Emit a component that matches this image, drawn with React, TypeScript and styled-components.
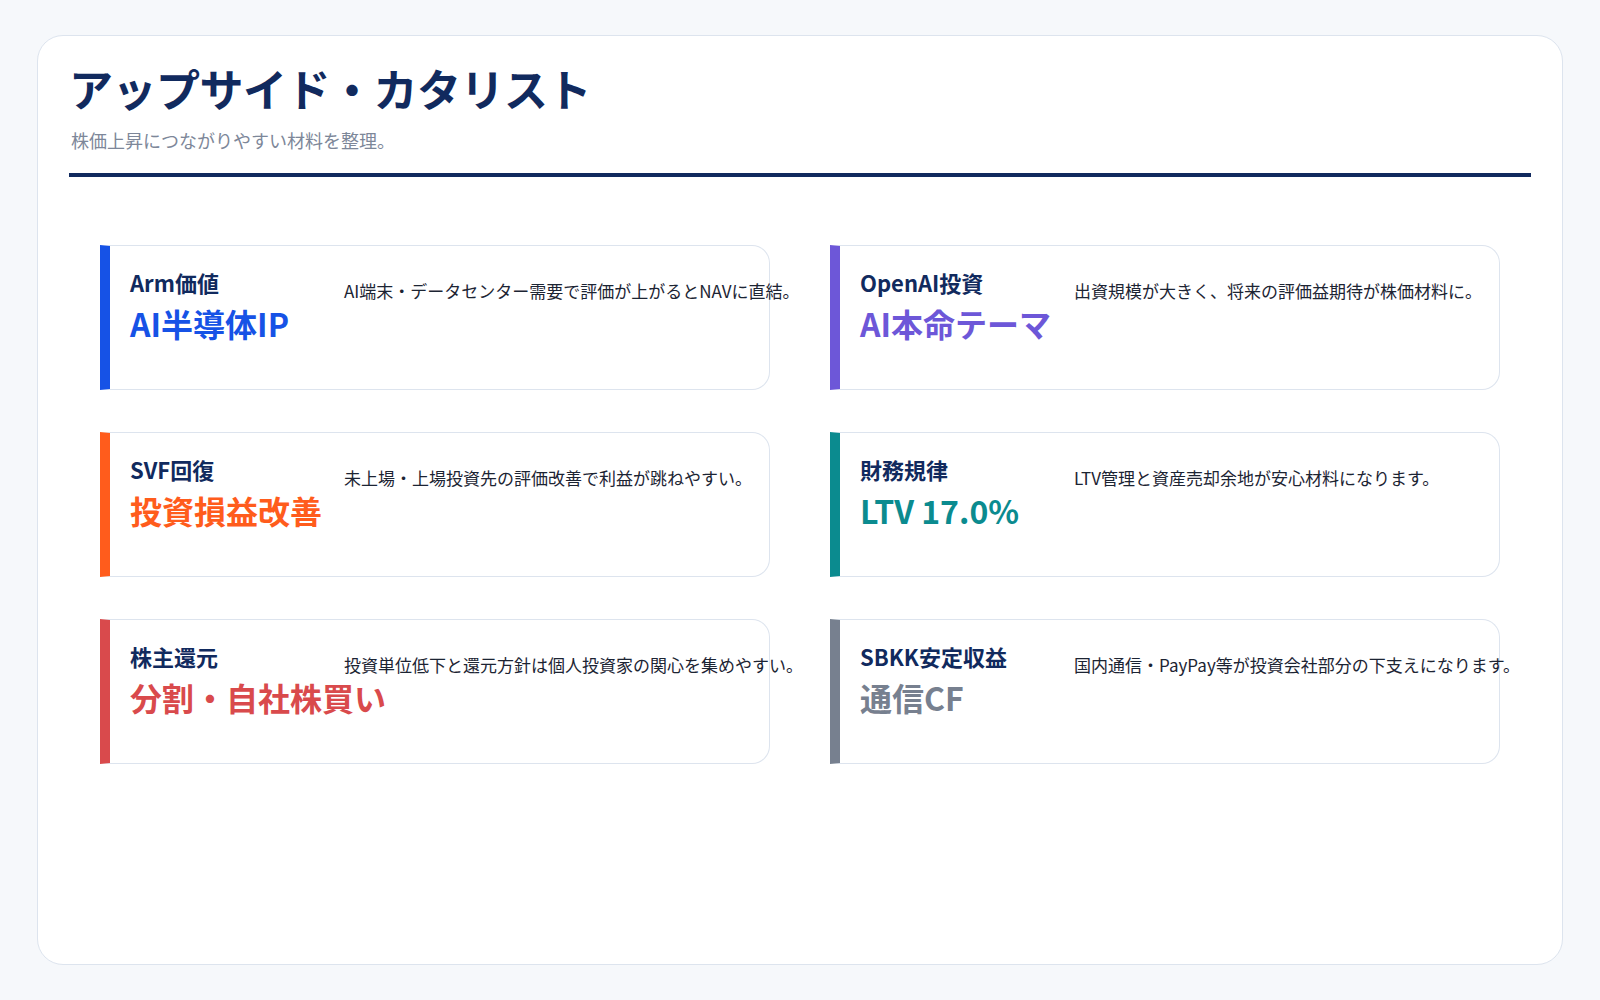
import React from "react";
import styled, { createGlobalStyle } from "styled-components";

const Global = createGlobalStyle`
  html, body { margin: 0; background: #f6f8fb; }
  body { font-family: "Noto Sans CJK JP", "Noto Sans", sans-serif; }
`;

const Page = styled.div`
  padding: 35px 37px;
  box-sizing: border-box;
  height: 1000px;
`;

const Panel = styled.div`
  background: #fff;
  border: 1.5px solid #dde4ee;
  border-radius: 26px;
  height: 930px;
  box-sizing: border-box;
  padding: 26px 31px;
`;

const Title = styled.h1`
  margin: 0;
  font-size: 44px;
  font-weight: 700;
  color: #112a5e;
  line-height: 1.2;
  letter-spacing: -0.5px;
`;

const Subtitle = styled.p`
  margin: 12px 0 0 2px;
  font-size: 18px;
  color: #7d8799;
`;

const Rule = styled.div`
  height: 4px;
  background: #112a5e;
  margin-top: 20px;
`;

const Grid = styled.div`
  display: grid;
  grid-template-columns: 670px 670px;
  column-gap: 60px;
  row-gap: 42px;
  padding: 68px 31px 0;
`;

const Card = styled.div<{ $c: string }>`
  height: 145px;
  box-sizing: border-box;
  border: 1.5px solid #dde4ee;
  border-left: 10px solid ${(p) => p.$c};
  border-radius: 0 18px 18px 0;
  padding: 20px 20px;
  display: flex;
  align-items: flex-start;
`;

const Inner = styled.div`
  display: flex;
  align-items: center;
  width: 100%;
`;

const Left = styled.div`
  width: 214px;
  flex: none;
`;

const Label = styled.div`
  font-size: 22px;
  font-weight: 700;
  color: #112a5e;
  white-space: nowrap;
`;

const Value = styled.div<{ $c: string }>`
  font-size: 32px;
  font-weight: 700;
  color: ${(p) => p.$c};
  margin-top: 2px;
  white-space: nowrap;
`;

const Desc = styled.div`
  font-size: 17px;
  color: #1c2433;
  white-space: nowrap;
  margin-top: -30px;
`;

const items = [
  { l: "Arm価値", v: "AI半導体IP", d: "AI端末・データセンター需要で評価が上がるとNAVに直結。", c: "#1652e6" },
  { l: "OpenAI投資", v: "AI本命テーマ", d: "出資規模が大きく、将来の評価益期待が株価材料に。", c: "#6d57d8" },
  { l: "SVF回復", v: "投資損益改善", d: "未上場・上場投資先の評価改善で利益が跳ねやすい。", c: "#ff5c1c" },
  { l: "財務規律", v: "LTV 17.0%", d: "LTV管理と資産売却余地が安心材料になります。", c: "#0b8b8f" },
  { l: "株主還元", v: "分割・自社株買い", d: "投資単位低下と還元方針は個人投資家の関心を集めやすい。", c: "#d94a4c" },
  { l: "SBKK安定収益", v: "通信CF", d: "国内通信・PayPay等が投資会社部分の下支えになります。", c: "#77808f" },
];

export default function App() {
  return (
    <>
      <Global />
      <Page>
        <Panel>
          <Title>アップサイド・カタリスト</Title>
          <Subtitle>株価上昇につながりやすい材料を整理。</Subtitle>
          <Rule />
          <Grid>
            {items.map((it) => (
              <Card key={it.l} $c={it.c}>
                <Inner>
                  <Left>
                    <Label>{it.l}</Label>
                    <Value $c={it.c}>{it.v}</Value>
                  </Left>
                  <Desc>{it.d}</Desc>
                </Inner>
              </Card>
            ))}
          </Grid>
        </Panel>
      </Page>
    </>
  );
}
